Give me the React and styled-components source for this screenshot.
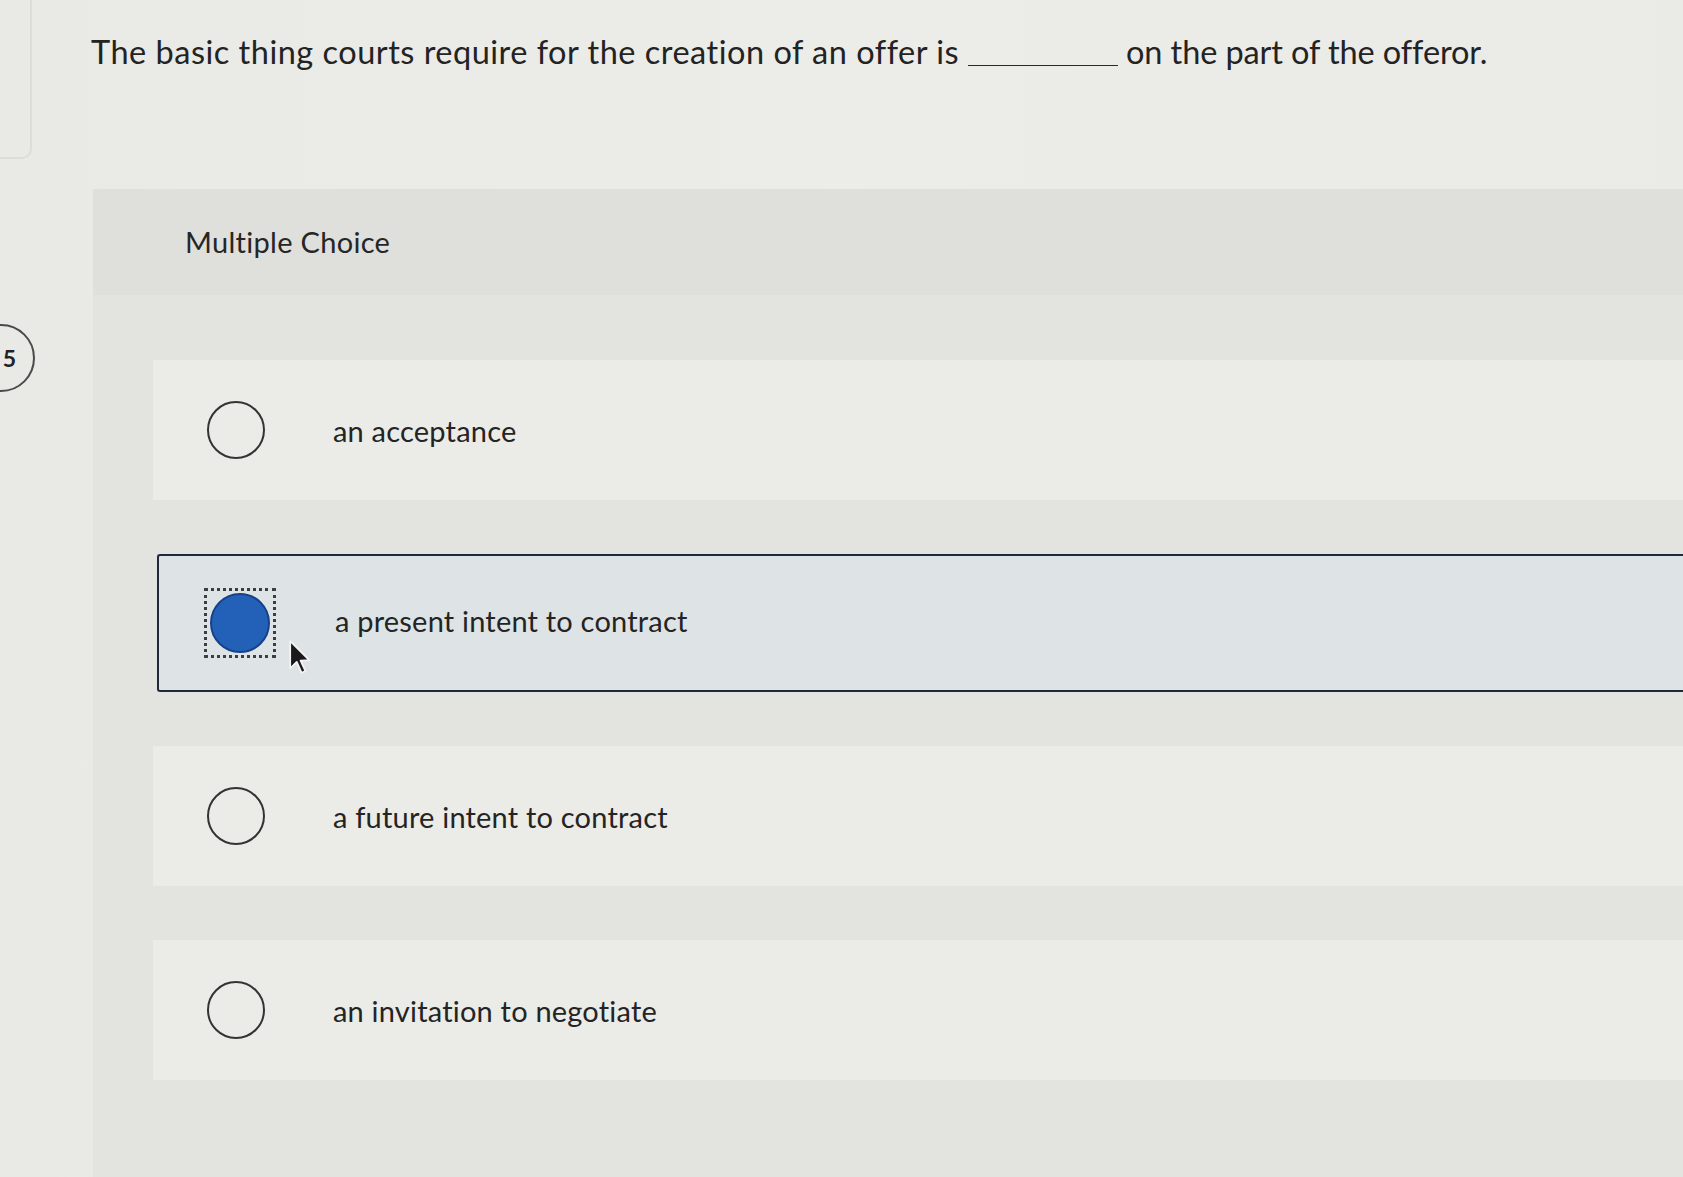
import React from "react";
import styled, { createGlobalStyle } from "styled-components";

const Global = createGlobalStyle`
  html, body { margin: 0; padding: 0; }
  body {
    background: #ebebe8;
    font-family: Lato, "Open Sans", "Liberation Sans", sans-serif;
    color: #222;
    overflow: hidden;
  }
`;

const Page = styled.div`
  position: relative;
  width: 1683px;
  height: 1177px;
  overflow: hidden;
  display: flex;
  flex-direction: column;
  background: linear-gradient(90deg, #e9e9e6 0%, #ecece9 50%, #eaeae7 100%);
`;

const CornerCard = styled.div`
  position: absolute;
  left: -10px;
  top: -10px;
  width: 38px;
  height: 165px;
  border: 2px solid #dcdcd9;
  border-radius: 0 0 10px 0;
`;

const QuestionRow = styled.div`
  display: flex;
  align-items: baseline;
  padding: 32px 0 0 91px;
  height: 155px;
  box-sizing: border-box;
  font-size: 32.5px;
  letter-spacing: 0.5px;
  color: #232323;
`;

const Blank = styled.span`
  display: inline-block;
  width: 150px;
  margin: 0 8px 0 9px;
  border-bottom: 1.5px solid #2a2a2a;
  transform: translateY(2px);
`;

const Tail = styled.span`
  letter-spacing: -0.1px;
`;

const Main = styled.div`
  display: flex;
  flex: 1;
  padding-top: 34px;
`;

const Gutter = styled.div`
  position: relative;
  width: 93px;
  flex-shrink: 0;
`;

const Badge = styled.div`
  position: absolute;
  left: -33px;
  top: 135px;
  width: 68px;
  height: 68px;
  border: 2px solid #4a4a4a;
  border-radius: 50%;
  display: flex;
  align-items: center;
  justify-content: flex-end;
  padding-right: 17px;
  box-sizing: border-box;
  font-size: 23px;
  font-weight: 700;
  color: #222;
`;

const Panel = styled.section`
  flex: 1;
  display: flex;
  flex-direction: column;
  background: #e3e3e0;
`;

const PanelHeader = styled.div`
  height: 106px;
  display: flex;
  align-items: center;
  padding-left: 92px;
  padding-bottom: 2px;
  box-sizing: border-box;
  background: #dfdfdc;
  font-size: 29px;
  letter-spacing: 0.3px;
  color: #262626;
`;

const Options = styled.div`
  display: flex;
  flex-direction: column;
  gap: 54px;
  padding: 65px 0 0 60px;
`;

const Option = styled.label`
  position: relative;
  display: flex;
  align-items: center;
  height: ${(p) => (p.$selected ? "138px" : "140px")};
  padding-left: ${(p) => (p.$selected ? "45px" : "54px")};
  box-sizing: border-box;
  background: ${(p) => (p.$selected ? "#dee4e5" : "#ebebe8")};
  border: ${(p) => (p.$selected ? "2px solid #1f2937" : "none")};
  border-right: none;
  border-radius: ${(p) => (p.$selected ? "3px 0 0 3px" : "0")};
  margin-left: ${(p) => (p.$selected ? "4px" : "0")};
  cursor: pointer;
`;

const Focus = styled.span`
  display: flex;
  align-items: center;
  justify-content: center;
  width: 72px;
  height: 70px;
  flex-shrink: 0;
  box-sizing: border-box;
  border: 3px dotted #3a3f47;
`;

const Radio = styled.span`
  width: ${(p) => (p.$checked ? "60px" : "58px")};
  height: ${(p) => (p.$checked ? "60px" : "58px")};
  flex-shrink: 0;
  border-radius: 50%;
  box-sizing: border-box;
  border: ${(p) => (p.$checked ? "2px solid #17418a" : "2.5px solid #333")};
  background: ${(p) => (p.$checked ? "#2361b8" : "transparent")};
`;

const OptionText = styled.span`
  margin-left: ${(p) => (p.$afterFocus ? "59px" : "68px")};
  font-size: 29px;
  letter-spacing: 0.2px;
  color: #242424;
  transform: ${(p) => (p.$afterFocus ? "translateY(-3px)" : "none")};
`;

const Cursor = styled.svg`
  position: absolute;
  left: 129px;
  top: 83px;
  width: 24px;
  height: 37px;
`;

const choices = [
  "an acceptance",
  "a present intent to contract",
  "a future intent to contract",
  "an invitation to negotiate",
];

export default function App() {
  const selected = 1;
  return (
    <>
      <Global />
      <Page>
        <CornerCard />
        <QuestionRow>
          The basic thing courts require for the creation of an offer is
          <Blank />
          <Tail>on the part of the offeror.</Tail>
        </QuestionRow>
        <Main>
          <Gutter>
            <Badge>5</Badge>
          </Gutter>
          <Panel>
            <PanelHeader>Multiple Choice</PanelHeader>
            <Options>
              {choices.map((c, i) => {
                const isSel = i === selected;
                return (
                  <Option key={c} $selected={isSel}>
                    {isSel ? (
                      <Focus>
                        <Radio $checked />
                      </Focus>
                    ) : (
                      <Radio />
                    )}
                    <OptionText $afterFocus={isSel}>{c}</OptionText>
                    {isSel && (
                      <Cursor viewBox="0 0 22 34">
                        <path
                          d="M2 2 L2 27 L8 21 L12.5 31 L16 29.5 L11.5 19.8 L19.5 19.5 Z"
                          fill="#1a1a1a"
                          stroke="#f4f4f4"
                          strokeWidth="1.6"
                          strokeLinejoin="round"
                        />
                      </Cursor>
                    )}
                  </Option>
                );
              })}
            </Options>
          </Panel>
        </Main>
      </Page>
    </>
  );
}
